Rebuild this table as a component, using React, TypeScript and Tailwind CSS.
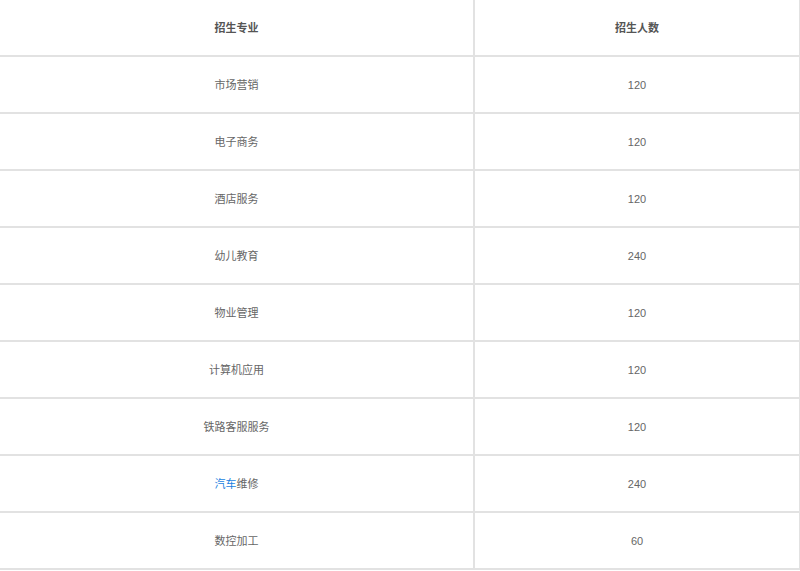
import React from "react";

const rows: [React.ReactNode, string][] = [
  ["市场营销", "120"],
  ["电子商务", "120"],
  ["酒店服务", "120"],
  ["幼儿教育", "240"],
  ["物业管理", "120"],
  ["计算机应用", "120"],
  ["铁路客服服务", "120"],
  [
    <>
      <span className="text-[#1a7fe0]">汽车</span>维修
    </>,
    "240",
  ],
  ["数控加工", "60"],
];

export default function App() {
  return (
    <div
      className="w-[800px] h-[571px] bg-white text-[11px] text-[#666]"
      style={{ fontFamily: '"Liberation Sans", Arial, "Noto Sans CJK SC", sans-serif' }}
    >
      <div className="flex h-[57px] border-b-2 border-[#e2e2e2]">
        <div className="w-[475px] border-r-2 border-[#e2e2e2] flex items-center justify-center pt-[2px] font-bold text-[#555]">
          招生专业
        </div>
        <div className="flex-1 border-r border-[#e2e2e2] flex items-center justify-center pt-[2px] font-bold text-[#555]">
          招生人数
        </div>
      </div>
      {rows.map(([name, num], i) => (
        <div key={i} className="flex h-[57px] border-b-2 border-[#e2e2e2]">
          <div className="w-[475px] border-r-2 border-[#e2e2e2] flex items-center justify-center pt-[2px]">
            {name}
          </div>
          <div className="flex-1 border-r border-[#e2e2e2] flex items-center justify-center pt-[2px]">
            {num}
          </div>
        </div>
      ))}
    </div>
  );
}
